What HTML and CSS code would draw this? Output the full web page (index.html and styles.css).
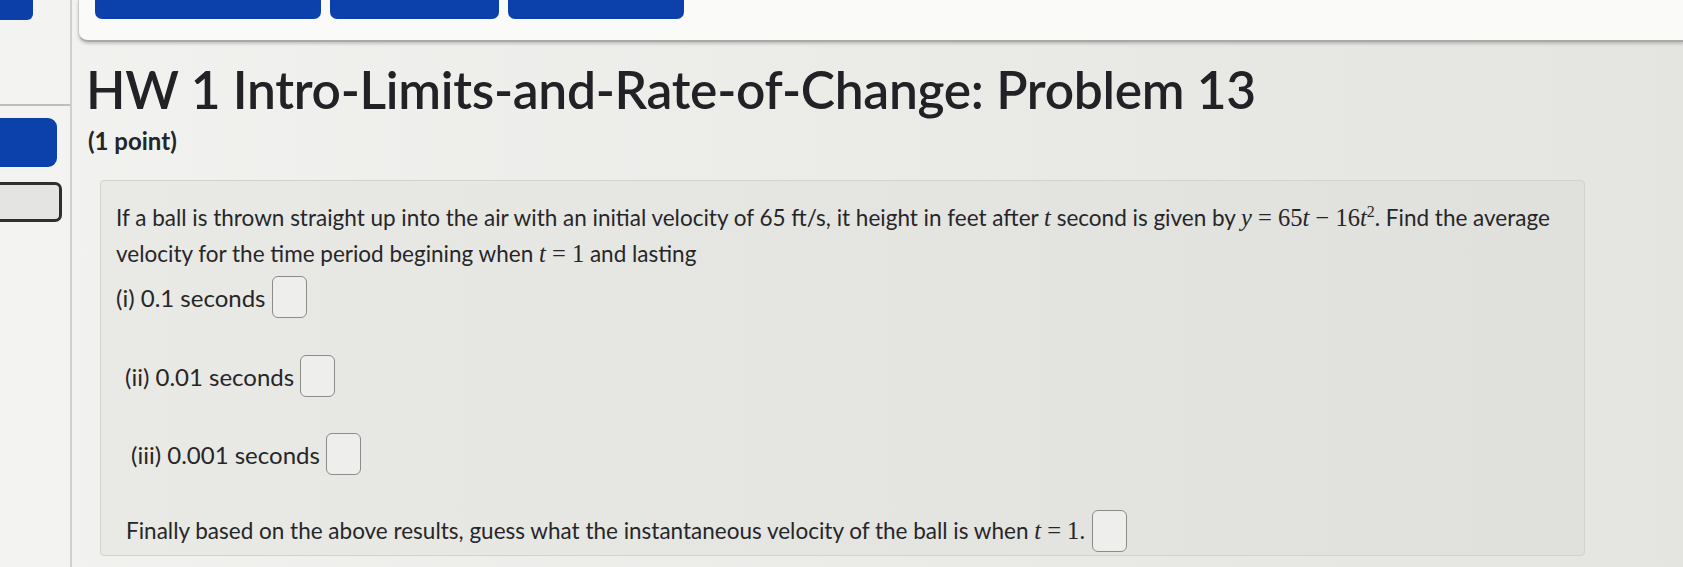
FILE: index.html
```html
<!DOCTYPE html>
<html lang="en">
<head>
<meta charset="utf-8">
<title>HW 1 Intro-Limits-and-Rate-of-Change: Problem 13</title>
<link rel="stylesheet" href="styles.css">
</head>
<body>
<div class="page">
  <aside class="sidebar">
    <div class="side-tab"></div>
    <div class="side-sep"></div>
    <div class="side-btn"></div>
    <div class="side-outline"></div>
  </aside>
  <main class="main">
    <div class="topcard">
      <span class="tbtn tbtn1"></span>
      <span class="tbtn tbtn2"></span>
      <span class="tbtn tbtn3"></span>
    </div>
    <h1 class="title">HW 1 Intro-Limits-and-Rate-of-Change: Problem 13</h1>
    <div class="points">(1 point)</div>
    <section class="problem">
      <p class="intro">If a ball is thrown straight up into the air with an initial velocity of 65 ft/s, it height in feet after <span class="m"><i>t</i></span> second is given by <span class="m"><i>y</i> = 65<i>t</i> &minus; 16<i>t</i><sup>2</sup></span>. Find the average velocity for the time period begining when <span class="m"><i>t</i> = 1</span> and lasting</p>
      <div class="row r1"><span>(i) 0.1 seconds</span><span class="ans"></span></div>
      <div class="row r2"><span>(ii) 0.01 seconds</span><span class="ans"></span></div>
      <div class="row r3"><span>(iii) 0.001 seconds</span><span class="ans"></span></div>
      <div class="row r4"><span>Finally based on the above results, guess what the instantaneous velocity of the ball is when <span class="m"><i>t</i> = 1.</span></span><span class="ans"></span></div>
    </section>
  </main>
</div>
</body>
</html>
```

FILE: styles.css
```css
* { box-sizing: border-box; }
html, body { margin: 0; padding: 0; }
body {
  width: 1683px;
  height: 567px;
  overflow: hidden;
  background: linear-gradient(to right, #f2f2f0 0%, #ebebe8 50%, #e4e4e1 100%);
  font-family: "Lato", "Open Sans", sans-serif;
  color: #262628;
}
.page {
  display: grid;
  grid-template-columns: 72px 1fr;
  height: 567px;
}
.sidebar {
  border-right: 2px solid #cfcfcc;
  display: flex;
  flex-direction: column;
  align-items: flex-start;
  background: #f3f3f1;
}
.side-tab {
  width: 33px;
  height: 20px;
  background: #0d3fa8;
  border-bottom-right-radius: 6px;
}
.side-sep {
  width: 70px;
  height: 2px;
  margin-top: 84px;
  background: #bdbdba;
}
.side-btn {
  width: 57px;
  height: 49px;
  margin-top: 12px;
  background: #0c40aa;
  border-radius: 0 9px 9px 0;
}
.side-outline {
  width: 62px;
  height: 40px;
  margin-top: 15px;
  background: #e4e4e2;
  border: 3px solid #2f2f31;
  border-left: none;
  border-radius: 0 7px 7px 0;
}
.main {
  display: flex;
  flex-direction: column;
  align-items: flex-start;
  min-width: 0;
}
.topcard {
  align-self: stretch;
  height: 42px;
  margin-left: 6px;
  background: #fafaf8;
  border-bottom: 2px solid #a9a9a6;
  border-left: 1px solid #c9c9c6;
  border-bottom-left-radius: 10px;
  box-shadow: 0 2px 3px rgba(0,0,0,0.18);
  display: flex;
  gap: 9px;
  padding-left: 16px;
  align-items: flex-start;
}
.tbtn {
  height: 19px;
  background: #0c40aa;
  border-radius: 0 0 7px 7px;
}
.tbtn1 { width: 226px; }
.tbtn2 { width: 169px; }
.tbtn3 { width: 176px; }
.title {
  margin: 16px 0 0 14px;
  font-size: 51.5px;
  line-height: 63px;
  font-weight: 600;
  color: #222226;
  white-space: nowrap;
  letter-spacing: -0.3px;
}
.points {
  margin: 6px 0 0 16px;
  font-size: 24px;
  line-height: 28px;
  font-weight: 700;
  color: #252528;
}
.problem {
  margin: 25px 0 0 28px;
  width: 1485px;
  height: 376px;
  background: linear-gradient(to right, #e9e9e6, #e0e0dd);
  border: 1px solid #d2d2cf;
  border-radius: 4px;
  padding: 19px 16px 0 15px;
  font-size: 22.5px;
  color: #262629;
}
.intro {
  margin: 0;
  line-height: 36px;
  width: 1440px;
}
.m {
  font-family: "Liberation Serif", "Times New Roman", serif;
  font-size: 24.5px;
  white-space: nowrap;
}
.m i { font-style: italic; }
.m sup { font-size: 16px; line-height: 0; }
.row {
  display: flex;
  align-items: center;
  gap: 6px;
  height: 44px;
}
.r1, .r2, .r3 { font-size: 24px; }
.r1 { margin-top: 3px; }
.r2 { margin-top: 35px; padding-left: 9px; }
.r3 { margin-top: 34px; padding-left: 15px; }
.r4 { margin-top: 33px; padding-left: 10px; }
.ans {
  display: inline-block;
  width: 35px;
  height: 42px;
  border: 1.5px solid #8b8b89;
  border-radius: 6px;
  background: #eeeeec;
}
```
